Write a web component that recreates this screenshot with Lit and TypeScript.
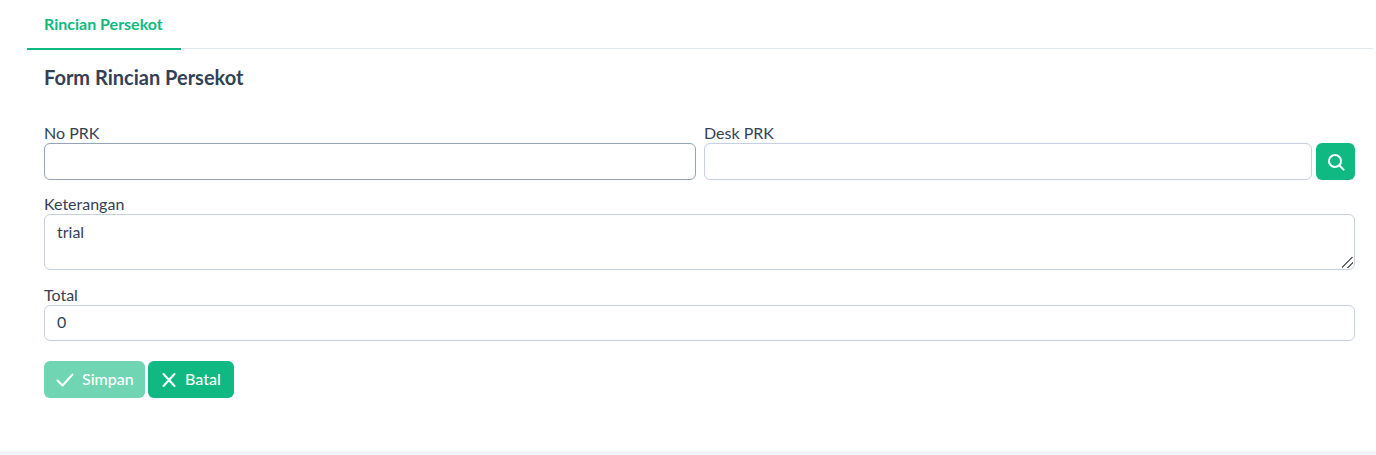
import { LitElement, css, html } from "lit";
import { customElement } from "lit/decorators.js";

@customElement("app-root")
export class AppRoot extends LitElement {
  static styles = css`
    :host {
      display: block;
      height: 455px;
      box-sizing: border-box;
      background: #f1f5f9;
      padding-bottom: 4px;
      font-family: Lato, sans-serif;
      color: #334155;
      overflow: hidden;
    }
    .card {
      height: 451px;
      box-sizing: border-box;
      background: #fff;
      padding: 0 3px 0 27px;
    }
    .tabs {
      display: flex;
      height: 49px;
      box-sizing: border-box;
      border-bottom: 1px solid #e2e8f0;
    }
    .tab {
      width: 154px;
      height: 50px;
      box-sizing: border-box;
      padding: 14px 0 0 17px;
      font-size: 16px;
      line-height: 19px;
      font-weight: 700;
      color: #10b981;
      border-bottom: 2px solid #10b981;
    }
    .body {
      padding: 0 18px 0 17px;
    }
    h2 {
      margin: 0;
      padding-top: 16px;
      padding-bottom: 1px;
      font-size: 20px;
      line-height: 24px;
      font-weight: 700;
      color: #334155;
    }
    .row {
      display: grid;
      grid-template-columns: 652px 651px;
      gap: 8px;
      margin-top: 33px;
    }
    .field {
      display: block;
      margin-top: 14px;
    }
    .field + .field {
      margin-top: 15px;
    }
    label {
      display: block;
      font-size: 16px;
      line-height: 20px;
      color: #334155;
    }
    input,
    textarea {
      display: block;
      width: 100%;
      box-sizing: border-box;
      background: #fff;
      border: 1px solid #c5d0e2;
      border-radius: 6px;
      padding: 0 12px;
      font: 16px/24px Lato, sans-serif;
      color: #334155;
      outline: none;
      margin: 0;
    }
    input {
      height: 36px;
      padding-bottom: 4px;
    }
    textarea {
      height: 56px;
      padding-top: 5px;
      resize: vertical;
    }
    textarea::-webkit-resizer {
      background: linear-gradient(
          135deg,
          transparent 44%,
          #666 44%,
          #666 54%,
          transparent 54%,
          transparent 70%,
          #666 70%,
          #666 80%,
          transparent 80%
        )
        right 1px bottom 1px / 11px 11px no-repeat;
    }
    .focus {
      height: 37px;
      border-color: #94a3b8;
    }
    .lookup {
      display: flex;
      gap: 4px;
    }
    .lookup input {
      flex: 1;
      height: 37px;
      min-width: 0;
    }
    .btn {
      display: inline-flex;
      align-items: center;
      height: 37px;
      box-sizing: border-box;
      border: 0;
      border-radius: 6px;
      background: #10b981;
      color: #fff;
      font: 500 16px/18px Lato, sans-serif;
      padding: 0;
    }
    .btn span {
      padding-bottom: 2px;
    }
    .btn svg {
      display: block;
      fill: none;
      stroke: currentColor;
      stroke-width: 2;
      stroke-linecap: round;
      stroke-linejoin: round;
    }
    .search {
      width: 39px;
      justify-content: center;
    }
    .actions {
      display: flex;
      gap: 3px;
      margin-top: 20px;
    }
    .save {
      width: 101px;
      padding-left: 12px;
      gap: 8px;
      background: #70d5b3;
    }
    .cancel {
      width: 86px;
      padding-left: 12px;
      gap: 7px;
    }
  `;

  render() {
    return html`
      <div class="card">
        <div class="tabs"><div class="tab">Rincian Persekot</div></div>
        <div class="body">
          <h2>Form Rincian Persekot</h2>
          <div class="row">
            <div>
              <label>No PRK</label>
              <input class="focus" type="text" />
            </div>
            <div>
              <label>Desk PRK</label>
              <div class="lookup">
                <input type="text" />
                <button class="btn search" aria-label="Cari">
                  <svg width="18" height="18" viewBox="0 0 18 18">
                    <circle cx="8" cy="8" r="6" />
                    <path d="M12.4 12.4l4.2 4.2" />
                  </svg>
                </button>
              </div>
            </div>
          </div>
          <div class="field">
            <label>Keterangan</label>
            <textarea .value=${"trial"}></textarea>
          </div>
          <div class="field">
            <label>Total</label>
            <input type="text" .value=${"0"} />
          </div>
          <div class="actions">
            <button class="btn save">
              <svg width="18" height="14" viewBox="0 0 18 14">
                <path d="M1.5 7.5l5 5L16.5 1.5" />
              </svg>
              <span>Simpan</span>
            </button>
            <button class="btn cancel">
              <svg width="18" height="14" viewBox="0 0 18 14">
                <path d="M3.5 1l11 12M14.5 1l-11 12" />
              </svg>
              <span>Batal</span>
            </button>
          </div>
        </div>
      </div>
    `;
  }
}
